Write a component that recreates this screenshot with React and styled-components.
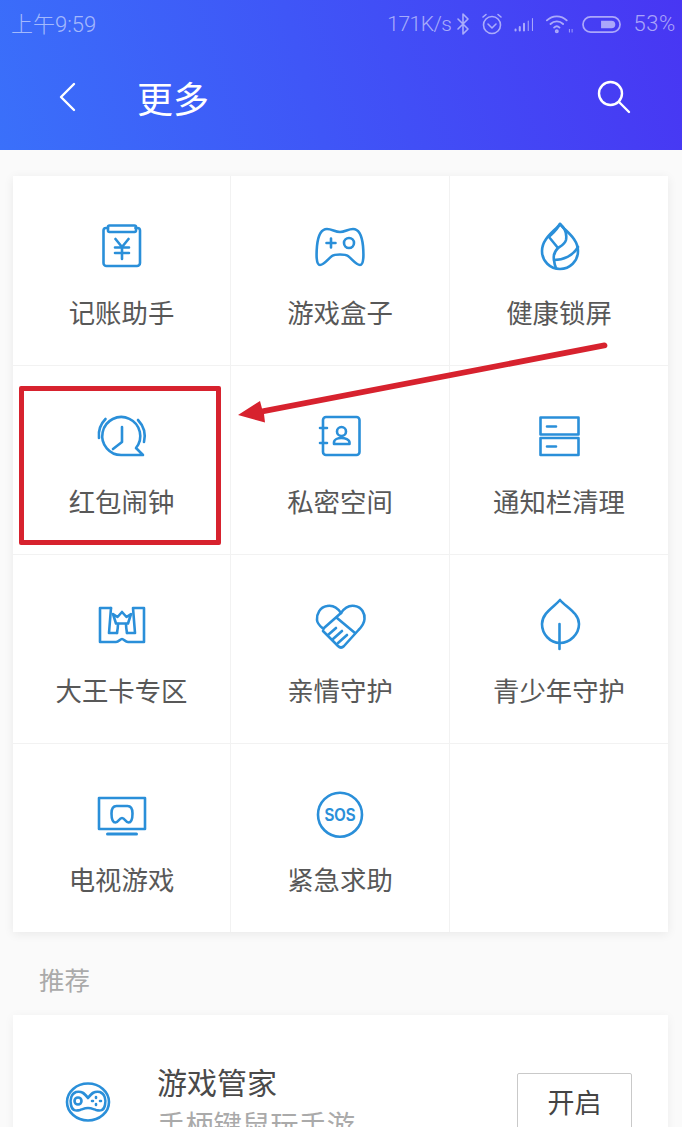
import React from 'react';
import styled, { createGlobalStyle } from 'styled-components';

const CJK = `'Noto Sans CJK SC', 'Noto Sans', sans-serif`;
const STATUS = 'rgba(255,255,255,.55)';

const GlobalStyle = createGlobalStyle`
  html, body {
    margin: 0;
    padding: 0;
    background: #fafafa;
  }
  body {
    font-family: ${CJK};
  }
`;

const Page = styled.div`
  width: 682px;
  height: 1127px;
  overflow: hidden;
  position: relative;
  background: #fafafa;
`;

const Header = styled.header`
  height: 150px;
  background: linear-gradient(74deg, #3a70fa 0%, #3f56f7 45%, #4836f3 100%);
  display: flex;
  flex-direction: column;
`;

const StatusBar = styled.div`
  height: 48px;
  padding: 0 6px 0 11px;
  display: flex;
  align-items: center;
  justify-content: space-between;
  color: ${STATUS};
  font-family: Roboto, ${CJK};
  font-weight: 300;
  font-size: 22px;
`;

const StatusRight = styled.div`
  display: flex;
  align-items: center;
`;

const StatusText = styled.span`
  margin-bottom: ${p => p.$lift || 0}px;
  margin-left: ${p => p.$gap || 0}px;
  font-size: ${p => p.$size || 22}px;
  letter-spacing: ${p => p.$track || 0}px;
`;

const NavBar = styled.div`
  flex: 1;
  display: flex;
  align-items: center;
  padding: 0 50px 4px 57px;
`;

const Title = styled.h1`
  margin: 0 0 0 60px;
  font-size: 36px;
  font-weight: 400;
  line-height: 1;
  color: #fff;
  flex: 1;
`;

const Grid = styled.section`
  margin: 26px 14px 0 13px;
  display: grid;
  grid-template-columns: 218px 219px 218px;
  grid-auto-rows: 189px;
  background: #fff;
  box-shadow: 0 2px 10px rgba(0, 0, 0, 0.07);
`;

const Cell = styled.div`
  position: relative;
  display: flex;
  flex-direction: column;
  align-items: center;
  box-sizing: border-box;
  padding-top: ${p => (p.$top ? 40 : 39)}px;
  border-right: ${p => (p.$last ? 'none' : '1px solid #f2f2f2')};
  border-top: ${p => (p.$top ? 'none' : '1px solid #f2f2f2')};
`;

const Label = styled.span`
  margin-top: 18px;
  font-size: 26.4px;
  line-height: 36px;
  color: #585858;
  white-space: nowrap;
`;

const Glyph = styled.svg`
  display: block;
  flex: none;
  fill: none;
  stroke: ${p => p.$color || '#2a8fd9'};
  stroke-width: ${p => p.$weight || 2.6};
  stroke-linecap: round;
  stroke-linejoin: round;
`;

const StatusGlyph = styled(Glyph).attrs({ $color: STATUS })`
  margin-left: ${p => p.$gap}px;
`;

const Highlight = styled.div`
  position: absolute;
  left: 6px;
  top: 20px;
  width: 202px;
  height: 159px;
  box-sizing: border-box;
  border: 5px solid #d7222e;
  border-radius: 2px;
`;

const ArrowLayer = styled.svg`
  position: absolute;
  left: 0;
  top: 0;
  pointer-events: none;
`;

const SectionTitle = styled.h2`
  margin: 30px 0 0 39px;
  font-size: 25.5px;
  line-height: 34px;
  font-weight: 400;
  color: #aaa;
`;

const RecommendCard = styled.section`
  margin: 19px 14px 0 13px;
  height: 200px;
  background: #fff;
  box-shadow: 0 2px 10px rgba(0, 0, 0, 0.05);
  display: flex;
  align-items: flex-start;
  padding: 46px 36px 0 52px;
  box-sizing: border-box;
`;

const GameIcon = styled(Glyph)`
  margin-top: 21px;
`;

const AppText = styled.div`
  margin-left: 46px;
  flex: 1;
`;

const AppName = styled.div`
  font-size: 30px;
  line-height: 40px;
  color: #4a4a4a;
`;

const AppDesc = styled.div`
  margin-top: 4px;
  font-size: 28.3px;
  line-height: 38px;
  color: #aaa;
`;

const OpenButton = styled.button`
  margin-top: 12px;
  width: 115px;
  height: 56px;
  background: #fff;
  border: 1px solid #c9c9c9;
  border-radius: 2px;
  font-family: ${CJK};
  font-size: 27px;
  color: #444;
  padding: 0;
`;

const SosText = styled.text`
  fill: #2a8fd9;
  stroke: none;
  font-family: 'Liberation Sans', sans-serif;
  font-weight: 700;
  font-size: 18px;
`;

const Icon = ({ children }) => (
  <Glyph viewBox="0 0 60 60" width="60" height="60">
    {children}
  </Glyph>
);

const ICONS = {
  bill: (
    <>
      <path d="M16 12h-2a2.500 2.500 0 0 0-2.500 2.500v32.500a3 3 0 0 0 3 3h30.500a3 3 0 0 0 3-3V14.500a2.500 2.500 0 0 0-2.500-2.500h-2" />
      <rect x="16" y="9.500" width="28" height="6.500" rx="1.500" />
      <path d="M23.500 23l6.500 8 6.500-8M23 31.500h14M23 37h14M30 31v12" />
    </>
  ),
  gamepad: (
    <>
      <path d="M17 13c5 0 8 3 13 3s8-3 13-3c6 0 9 7 10 17 .7 8 1 19-3 19-4 0-8-6-12-9-2-1.500-5-1.500-8-1.500s-6 0-8 1.500c-4 3-8 9-12 9s-3.700-11-3-19c1-10 4-17 10-17z" />
      <path d="M16.500 27h9M21 22.500v9" />
      <circle cx="39" cy="27" r="5" />
    </>
  ),
  drop: (
    <>
      <path d="M31 8C26 15 13 22 13 35a18 18 0 0 0 36 0C49 22 36 15 31 8z" />
      <path d="M31 8c-3 6-7 9-11 13l9 11" />
      <path d="M31 8c5 4 7 10 6 16-1 4-5 6-8 8-3 3-5 7-4 12 .3 3 1 6 2 8" />
      <path d="M25 44c9 0 19-4 24-13" />
    </>
  ),
  alarm: (
    <>
      <path d="M51 50H30A19 19 0 1 1 44 43z" />
      <path d="M30 22v15l-9 7" />
      <path d="M13.500 14A23 23 0 0 0 7 33M46 15a24 24 0 0 1 6 22" />
    </>
  ),
  contacts: (
    <>
      <rect x="13" y="12" width="36.500" height="38" rx="3" />
      <path d="M10 23h7M10 38h7" />
      <circle cx="31.500" cy="26.500" r="4.500" />
      <path d="M24 39v-1.500c0-3 4-4.500 7.500-4.500s8 1.500 8 4.500V39z" />
    </>
  ),
  drawers: (
    <>
      <rect x="11.500" y="12.500" width="38" height="17" />
      <rect x="11.500" y="33" width="38" height="17" />
      <path d="M18 21.500h9M18 41.500h9" />
    </>
  ),
  crown: (
    <>
      <path d="M19 14H8v34h16c3 0 4-3 6-3s3 3 6 3h16V14H41l2 25h-8" />
      <path d="M19 14l-2 25h8" />
      <path d="M21 20l4.500 3 4.500-5 4.500 5 4.500-3-3 9.500h-12z" />
      <path d="M26 30c0 3-.5 6-1 9M34 30c0 3 .5 6 1 9" />
    </>
  ),
  hands: (
    <>
      <path d="M31 19c-4-6-9-8-14-7C10 13 6.500 20 7 26c.3 4 3 6 6.500 9" />
      <path d="M31 19L14 34" />
      <path d="M31 19c4-6 9-8 14-7 7 1 10 8 9.500 13-.3 5-3 8-6 11L34 52c-2 2-4 2-6 0L13 37" />
      <path d="M27 24l18 15" />
      <path d="M18 41l8-7M23 45l9-8M28 49l9-8" />
    </>
  ),
  leaf: (
    <>
      <path d="M31 6C25 13 13 19 13 30c0 10 8 19 18 19s19-9 19-19C50 19 37 13 31 6z" />
      <path d="M30.500 30v25" />
    </>
  ),
  tv: (
    <>
      <rect x="7" y="15" width="46" height="31" />
      <path d="M15.500 51h29" strokeWidth="3" />
      <path d="M24.500 23h11c3.500 0 5 3 5 7.500 0 5-1.500 9-4 9-3 0-3.500-4.500-6.500-4.500s-3.500 4.500-6.500 4.500c-2.500 0-4-4-4-9 0-4.500 1.500-7.500 5-7.500z" />
    </>
  ),
  sos: (
    <>
      <circle cx="30" cy="31.700" r="22" />
      <SosText x="14.500" y="38.200" textLength="31" lengthAdjust="spacingAndGlyphs">SOS</SosText>
    </>
  ),
};

const ROWS = [
  { label: '记账助手', icon: 'bill' },
  { label: '游戏盒子', icon: 'gamepad' },
  { label: '健康锁屏', icon: 'drop' },
  { label: '红包闹钟', icon: 'alarm', marked: true },
  { label: '私密空间', icon: 'contacts' },
  { label: '通知栏清理', icon: 'drawers' },
  { label: '大王卡专区', icon: 'crown' },
  { label: '亲情守护', icon: 'hands' },
  { label: '青少年守护', icon: 'leaf' },
  { label: '电视游戏', icon: 'tv' },
  { label: '紧急求助', icon: 'sos' },
  { label: '', icon: null },
];

const StatusIcons = () => (
  <>
    <StatusGlyph viewBox="0 0 14 24" width="14" height="24" $weight={1.6} $gap={4}>
      <path d="M2 7l10 10-5 5V2l5 5L2 17" />
    </StatusGlyph>
    <StatusGlyph viewBox="0 0 24 24" width="24" height="24" $weight={1.6} $gap={10}>
      <circle cx="12" cy="13" r="8.500" />
      <path d="M8 12l4 4 4-4M3 5l3-2.500M21 5l-3-2.500" />
    </StatusGlyph>
    <StatusGlyph viewBox="0 0 26 20" width="22" height="17" $weight={2.4} $gap={9}>
      <path d="M3 17v-1M8 17v-4M13 17V9" />
      <path d="M18 17V6M23 17V3" strokeWidth="1.200" />
    </StatusGlyph>
    <StatusGlyph viewBox="0 0 30 24" width="27" height="22" $weight={2} $gap={11}>
      <path d="M1 8c6-6 16-6 22 0M5 12c4-4 10-4 14 0M9 16c2-2 4-2 6 0" />
      <circle cx="12" cy="20" r="1.200" />
      <path d="M26 18v3M29 18v3" strokeWidth="1" />
    </StatusGlyph>
    <StatusGlyph viewBox="0 0 42 20" width="40" height="19" $weight={1.8} $gap={9}>
      <rect x="1" y="2" width="39" height="16" rx="8" />
      <path d="M20 6h11a4 4 0 0 1 0 8H20z" fill={STATUS} stroke="none" />
    </StatusGlyph>
  </>
);

const App = () => (
  <Page>
    <GlobalStyle />
    <Header>
      <StatusBar>
        <StatusText $lift={4}>上午9:59</StatusText>
        <StatusRight>
          <StatusText $size={21} $track={-0.5} $lift={1}>171K/s</StatusText>
          <StatusIcons />
          <StatusText $gap={12} $track={0.6} $lift={1}>53%</StatusText>
        </StatusRight>
      </StatusBar>
      <NavBar>
        <Glyph viewBox="0 0 20 30" width="20" height="30" $color="#fff" $weight={2.4}>
          <path d="M17 2L4 15l13 13" />
        </Glyph>
        <Title>更多</Title>
        <Glyph viewBox="0 0 36 36" width="36" height="36" $color="#fff" $weight={2.4}>
          <circle cx="14.500" cy="14.500" r="11.500" />
          <path d="M23 23l10 10" />
        </Glyph>
      </NavBar>
    </Header>

    <Grid>
      {ROWS.map((item, i) => (
        <Cell key={i} $last={i % 3 === 2} $top={i < 3}>
          {item.icon && <Icon>{ICONS[item.icon]}</Icon>}
          {item.label && <Label>{item.label}</Label>}
          {item.marked && <Highlight />}
        </Cell>
      ))}
    </Grid>

    <SectionTitle>推荐</SectionTitle>
    <RecommendCard>
      <GameIcon viewBox="0 0 46 40" width="46" height="40" $weight={2.6}>
        <ellipse cx="23" cy="20" rx="21" ry="18.500" />
        <path d="M11 10c6-1 8 1 12 6 4-5 6-7 12-6 5 2 6 8 5 13-1 6-5 6-9 5-3-1-5-2-8-2s-5 1-8 2c-4 1-8 1-9-5-1-5 0-11 5-13z" />
        <circle cx="13" cy="19" r="3.500" />
        <path d="M31 15v1M35 19h1M27 19h1M31 22v1" />
      </GameIcon>
      <AppText>
        <AppName>游戏管家</AppName>
        <AppDesc>手柄键鼠玩手游</AppDesc>
      </AppText>
      <OpenButton>开启</OpenButton>
    </RecommendCard>

    <ArrowLayer viewBox="0 0 682 1127" width="682" height="1127">
      <path d="M604 342.500a3 3 0 0 1 2 5.500L264 414l1 8.500-27-7.500 22-14 2 7.500z" fill="#d7222e" />
    </ArrowLayer>
  </Page>
);

export default App;
